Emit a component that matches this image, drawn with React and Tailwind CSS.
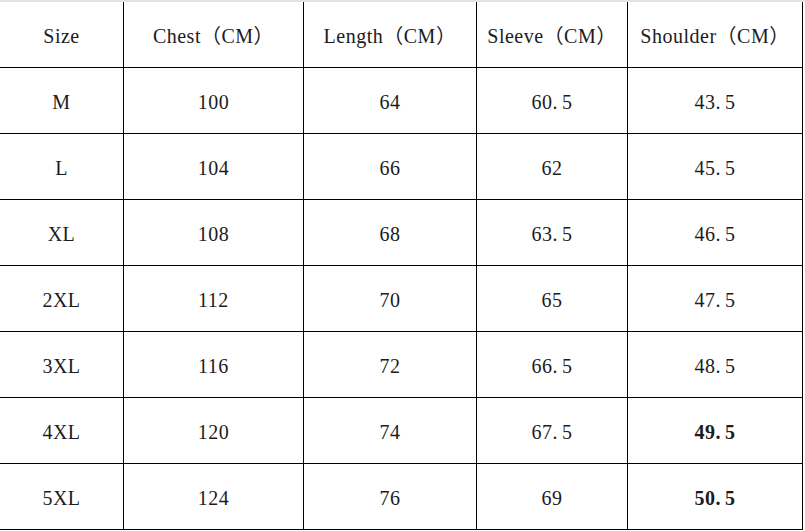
import React from "react";

const headers = ["Size", "Chest（CM）", "Length（CM）", "Sleeve（CM）", "Shoulder（CM）"];

const rows = [
  ["M", "100", "64", "60.5", "43.5"],
  ["L", "104", "66", "62", "45.5"],
  ["XL", "108", "68", "63.5", "46.5"],
  ["2XL", "112", "70", "65", "47.5"],
  ["3XL", "116", "72", "66.5", "48.5"],
  ["4XL", "120", "74", "67.5", "49.5"],
  ["5XL", "124", "76", "69", "50.5"],
];

const boldCells = ["49.5", "50.5"];

// the source font sets the decimal point in a full mono cell, so leave a gap after it
const Value = ({ text }) => {
  if (!text.includes(".")) return text;
  const [a, b] = text.split(".");
  return (
    <>
      {a}
      <span className="mr-[4px]">.</span>
      {b}
    </>
  );
};

export default function App() {
  return (
    <div
      className="w-[805px] h-[531px] bg-white text-[#1c1c1c] overflow-hidden"
      style={{ fontFamily: '"Liberation Serif", "Noto Sans CJK SC", serif' }}
    >
      {/* faint line along the top edge */}
      <div className="h-[2px] bg-[#e4e4e4]" />
      <div className="grid w-[803px] grid-cols-[124px_180px_173px_151px_175px] auto-rows-[66px] text-[20px]">
        {headers.map((h) => (
          <div
            key={h}
            className="flex items-center justify-center border-r border-b border-black whitespace-nowrap pt-[3px] tracking-[0.5px]"
          >
            {h}
          </div>
        ))}
        {rows.map((row) =>
          row.map((cell, i) => (
            <div
              key={row[0] + i}
              className={
                "flex items-center justify-center border-r border-b border-black pt-[3px] tracking-[0.5px] " +
                (boldCells.includes(cell) && i === 4 ? "font-bold" : "")
              }
            >
              <Value text={cell} />
            </div>
          ))
        )}
      </div>
    </div>
  );
}
